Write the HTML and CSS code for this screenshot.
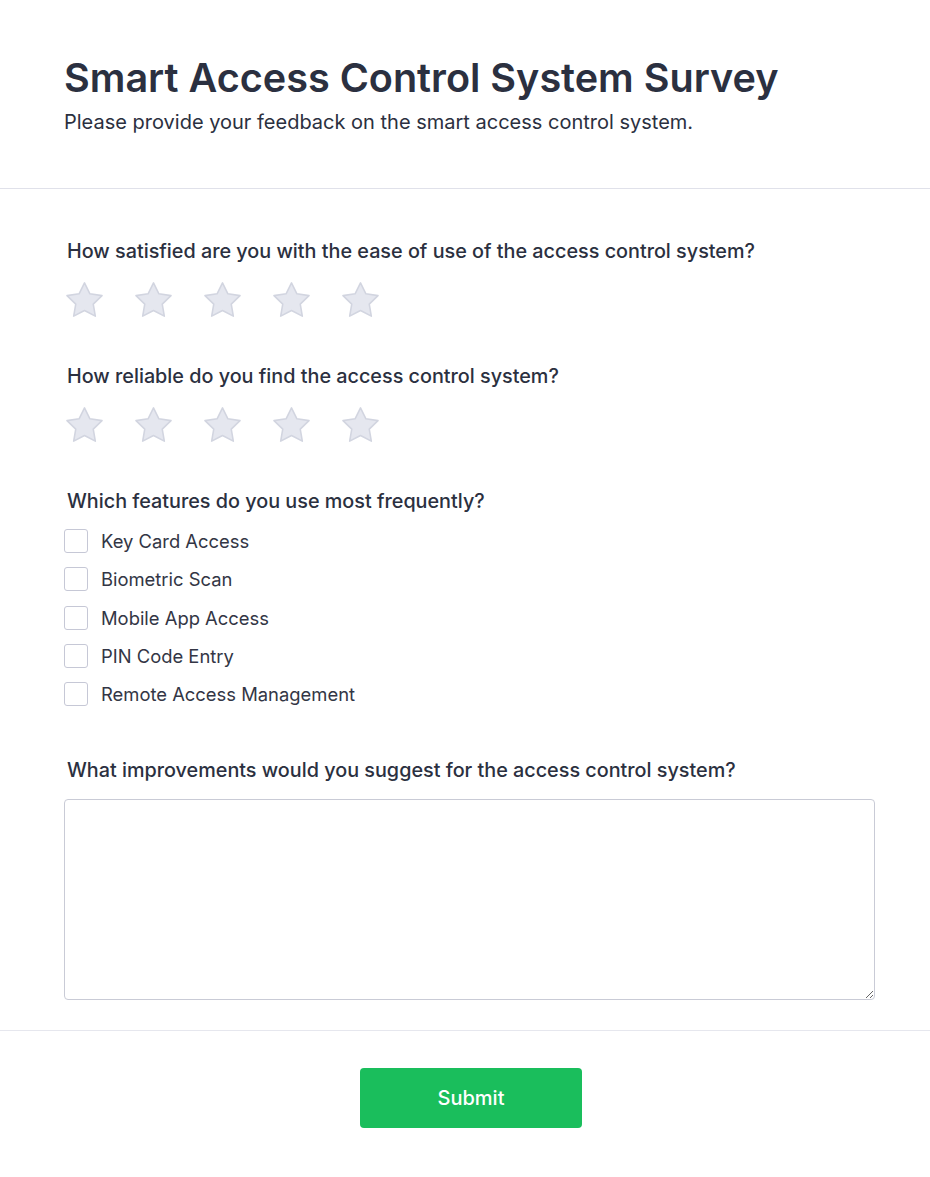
FILE: index.html
```html
<!DOCTYPE html>
<html lang="en">
<head>
<meta charset="utf-8">
<title>Smart Access Control System Survey</title>
<link rel="stylesheet" href="styles.css">
</head>
<body>
<div class="page">
  <header class="header">
    <h1 class="title">Smart Access Control System Survey</h1>
    <p class="subtitle">Please provide your feedback on the smart access control system.</p>
  </header>
  <main class="body">
    <section class="question">
      <h2 class="q-label">How satisfied are you with the ease of use of the access control system?</h2>
      <div class="stars">
        <svg class="star" viewBox="1.5 1.5 21 20" width="37" height="35"><path d="M12 2l3.09 6.26L22 9.27l-5 4.87 1.18 6.88L12 17.77l-6.18 3.25L7 14.14 2 9.27l6.91-1.01L12 2z"/></svg>
        <svg class="star" viewBox="1.5 1.5 21 20" width="37" height="35"><path d="M12 2l3.09 6.26L22 9.27l-5 4.87 1.18 6.88L12 17.77l-6.18 3.25L7 14.14 2 9.27l6.91-1.01L12 2z"/></svg>
        <svg class="star" viewBox="1.5 1.5 21 20" width="37" height="35"><path d="M12 2l3.09 6.26L22 9.27l-5 4.87 1.18 6.88L12 17.77l-6.18 3.25L7 14.14 2 9.27l6.91-1.01L12 2z"/></svg>
        <svg class="star" viewBox="1.5 1.5 21 20" width="37" height="35"><path d="M12 2l3.09 6.26L22 9.27l-5 4.87 1.18 6.88L12 17.77l-6.18 3.25L7 14.14 2 9.27l6.91-1.01L12 2z"/></svg>
        <svg class="star" viewBox="1.5 1.5 21 20" width="37" height="35"><path d="M12 2l3.09 6.26L22 9.27l-5 4.87 1.18 6.88L12 17.77l-6.18 3.25L7 14.14 2 9.27l6.91-1.01L12 2z"/></svg>
      </div>
    </section>
    <section class="question">
      <h2 class="q-label">How reliable do you find the access control system?</h2>
      <div class="stars">
        <svg class="star" viewBox="1.5 1.5 21 20" width="37" height="35"><path d="M12 2l3.09 6.26L22 9.27l-5 4.87 1.18 6.88L12 17.77l-6.18 3.25L7 14.14 2 9.27l6.91-1.01L12 2z"/></svg>
        <svg class="star" viewBox="1.5 1.5 21 20" width="37" height="35"><path d="M12 2l3.09 6.26L22 9.27l-5 4.87 1.18 6.88L12 17.77l-6.18 3.25L7 14.14 2 9.27l6.91-1.01L12 2z"/></svg>
        <svg class="star" viewBox="1.5 1.5 21 20" width="37" height="35"><path d="M12 2l3.09 6.26L22 9.27l-5 4.87 1.18 6.88L12 17.77l-6.18 3.25L7 14.14 2 9.27l6.91-1.01L12 2z"/></svg>
        <svg class="star" viewBox="1.5 1.5 21 20" width="37" height="35"><path d="M12 2l3.09 6.26L22 9.27l-5 4.87 1.18 6.88L12 17.77l-6.18 3.25L7 14.14 2 9.27l6.91-1.01L12 2z"/></svg>
        <svg class="star" viewBox="1.5 1.5 21 20" width="37" height="35"><path d="M12 2l3.09 6.26L22 9.27l-5 4.87 1.18 6.88L12 17.77l-6.18 3.25L7 14.14 2 9.27l6.91-1.01L12 2z"/></svg>
      </div>
    </section>
    <section class="question q-options">
      <h2 class="q-label q-opt-label">Which features do you use most frequently?</h2>
      <div class="options">
        <label class="option"><span class="box"></span><span class="opt-text">Key Card Access</span></label>
        <label class="option"><span class="box"></span><span class="opt-text">Biometric Scan</span></label>
        <label class="option"><span class="box"></span><span class="opt-text">Mobile App Access</span></label>
        <label class="option"><span class="box"></span><span class="opt-text">PIN Code Entry</span></label>
        <label class="option"><span class="box"></span><span class="opt-text">Remote Access Management</span></label>
      </div>
    </section>
    <section class="question last">
      <h2 class="q-label q-text">What improvements would you suggest for the access control system?</h2>
      <textarea class="textarea"></textarea>
    </section>
  </main>
  <footer class="footer">
    <button class="submit" type="button">Submit</button>
  </footer>
</div>
</body>
</html>
```
FILE: styles.css
```css
* { box-sizing: border-box; }
html, body { margin: 0; padding: 0; background: #ffffff; }
body {
  font-family: Inter, "Noto Sans", "Liberation Sans", sans-serif;
  color: #2d3142;
}
.page { width: 930px; }
.header {
  padding: 54px 55px 52px 64px;
  border-bottom: 1px solid #e0e1ea;
}
.title {
  margin: 0;
  font-size: 39.6px;
  line-height: 48px;
  font-weight: 600;
  color: #2b3040;
}
.subtitle {
  margin: 6px 0 0 0;
  font-size: 20px;
  line-height: 28px;
  font-weight: 400;
  color: #2b3040;
}
.body {
  padding: 47px 55px 30px 64px;
  border-bottom: 1px solid #e6e7ee;
}
.question { margin-bottom: 44px; }
.question.q-options { margin-bottom: 49px; }
.question.last { margin-bottom: 0; }
.q-label {
  margin: 0 0 16px 3px;
  font-size: 19.8px;
  line-height: 30px;
  font-weight: 500;
  color: #2b3040;
}
.q-opt-label { margin-bottom: 13px; }
.q-text { margin-bottom: 14px; }
.stars { display: flex; gap: 32px; padding-left: 2px; }
.star path {
  fill: #e5e7ef;
  stroke: #d2d5e0;
  stroke-width: 0.9;
  stroke-linejoin: round;
}
.options { display: flex; flex-direction: column; gap: 14.3px; }
.option { display: flex; align-items: center; gap: 13px; height: 24px; }
.box {
  width: 24px; height: 24px;
  border: 1px solid #c6c8d6;
  border-radius: 3px;
  background: #fff;
  flex: none;
}
.opt-text { font-size: 18.4px; line-height: 24px; color: #333645; }
.textarea {
  display: block;
  width: 811px;
  height: 201px;
  margin: 0;
  border: 1px solid #c9cbd6;
  border-radius: 4px;
  font-family: inherit;
  font-size: 16px;
  resize: vertical;
  outline: none;
}
.footer {
  padding: 37px 0 0 0;
  display: flex;
  justify-content: center;
}
.submit {
  width: 222px;
  height: 60px;
  background: #1abe5c;
  color: #ffffff;
  border: none;
  border-radius: 4px;
  font-family: inherit;
  font-size: 20px;
  font-weight: 500;
  margin-left: 12px;
}
```
